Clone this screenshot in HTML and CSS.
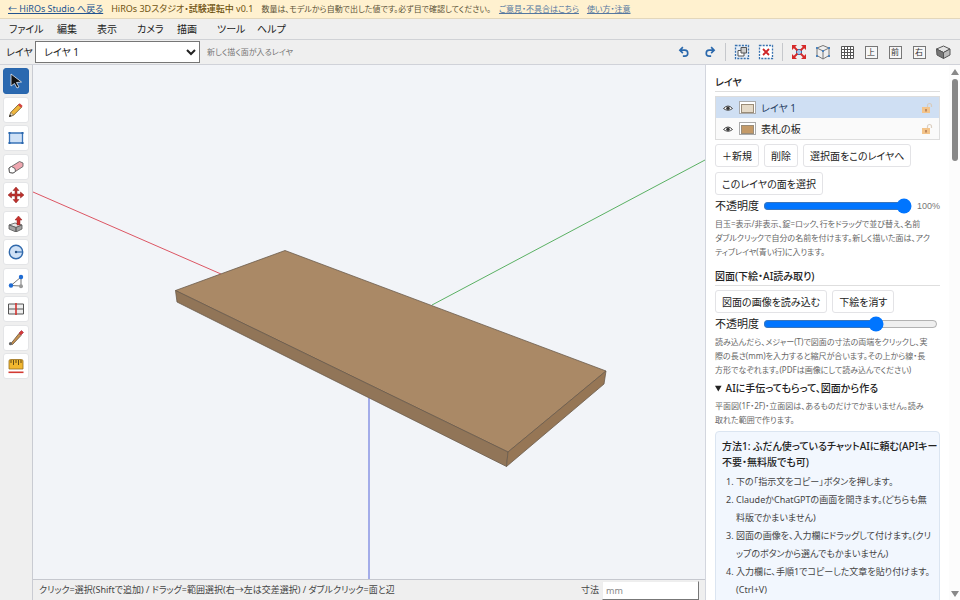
FILE: index.html
```html
<!DOCTYPE html>
<html lang="ja">
<head>
<meta charset="utf-8">
<meta name="viewport" content="width=device-width, initial-scale=1">
<title>HiROs 3Dスタジオ</title>
<link rel="stylesheet" href="styles.css">
</head>
<body>
<header class="notice">
  <a href="#back">← HiROs Studio へ戻る</a>
  <strong class="product">HiROs 3Dスタジオ・<b>試験運転中</b> v0.1</strong>
  <span class="notice-text">数量は、モデルから自動で出した値です。必ず目で確認してください。</span>
  <a class="soft" href="#feedback">ご意見・不具合はこちら</a>
  <a class="soft" href="#guide">使い方・注意</a>
</header>
<nav class="menubar">
  <button type="button">ファイル</button>
  <button type="button">編集</button>
  <button type="button">表示</button>
  <button type="button">カメラ</button>
  <button type="button">描画</button>
  <button type="button">ツール</button>
  <button type="button">ヘルプ</button>
</nav>
<div class="toolbar">
  <label for="layer">レイヤ</label>
  <select id="layer"><option>レイヤ 1</option><option>表札の板</option></select>
  <span class="toolbar-hint">新しく描く面が入るレイヤ</span>
  <div class="actions">
    <div class="history">
      <button type="button" aria-label="元に戻す"><svg viewBox="0 0 16 16"><path d="M6.500 1.500 2.500 5.500l4 4M3 5.500h6a4 4 0 0 1 0 8H6.500" fill="none" stroke="#2a68ac" stroke-width="2.200"/></svg></button>
      <button type="button" aria-label="やり直す"><svg viewBox="0 0 16 16"><path d="m9.500 1.500 4 4-4 4M13 5.500H7a4 4 0 0 0 0 8h2.500" fill="none" stroke="#2a68ac" stroke-width="2.200"/></svg></button>
    </div>
    <span class="sep"></span>
    <button type="button" aria-label="グループ化"><svg viewBox="0 0 16 16"><path d="M1.500 1.500h13v13h-13z" fill="#e4edf7" stroke="#3872b0" stroke-width="1.300" stroke-dasharray="2 1.200"/><path d="M4 6.500h6V12H4z" fill="#fff" stroke="#555"/><path d="M7 3.500h5.500V9H7z" fill="#ccc" stroke="#555"/></svg></button>
    <button type="button" aria-label="グループ解除"><svg viewBox="0 0 16 16"><path d="M1.500 1.500h13v13h-13z" fill="#fff" stroke="#3872b0" stroke-width="1.300" stroke-dasharray="2 1.200"/><path d="m5 5 6 6m0-6-6 6" stroke="#cf2528" stroke-width="1.800"/></svg></button>
    <span class="sep"></span>
    <button type="button" aria-label="全体表示"><svg viewBox="0 0 16 16"><path d="M5.500 5.500h5v5h-5z" fill="#a9c6e8" stroke="#3872b0"/><path d="m2.500 2.500 4 4m7-4-4 4m-7 7 4-4m7 4-4-4" stroke="#d62a2a" stroke-width="1.800"/><path d="M1 1h5L1 6zM15 1v5l-5-5zM1 15v-5l5 5zM15 15h-5l5-5z" fill="#d62a2a"/></svg></button>
    <button type="button" aria-label="立体表示"><svg viewBox="0 0 16 16"><path d="m2 4 6-2.500L14 4v7.500L8 15l-6-3.500zM2 4l6 3 6-3M8 7v8" fill="none" stroke="#777"/><g fill="#4c82bc"><path d="M1 3h2v2H1zM13 3h2v2h-2zM1 11h2v2H1zM13 11h2v2h-2zM7 6h2v2H7z"/></g></svg></button>
    <button type="button" aria-label="グリッド"><svg viewBox="0 0 16 16"><path d="M2.500 2.500h12v12h-12zM5.500 2.500v12m3-12v12m3-12v12M2.500 5.500h12M2.500 8.500h12M2.500 11.500h12" fill="#fff" stroke="#555"/></svg></button>
    <button type="button" class="view"><span>上</span></button>
    <button type="button" class="view"><span>前</span></button>
    <button type="button" class="view"><span>右</span></button>
    <button type="button" aria-label="等角投影"><svg viewBox="0 0 16 16"><path d="m1.500 5 7-3 6.500 3-6.500 3.500z" fill="#e4e4e4" stroke="#555"/><path d="m1.500 5 7 3.500v6L2 11z" fill="#777" stroke="#555"/><path d="M8.500 8.500 15 5v6l-6.500 3.500z" fill="#bbb" stroke="#555"/></svg></button>
  </div>
</div>
<div class="workspace">
  <aside class="tools">
    <button type="button" class="active" aria-label="選択"><svg viewBox="0 0 16 16"><path d="m3 1 10.500 8-5 .5 2.500 4.500-2 1-2.500-4.500L3 13z" fill="#111" stroke="#e8eef5" stroke-width=".8"/></svg></button>
    <button type="button" aria-label="線"><svg viewBox="0 0 16 16"><path d="m1.500 14.500 1.200-4 7.800-8 3 2.800-8 8z" fill="#efb63d" stroke="#6e5424" stroke-width=".8"/><path d="m10 3 1.700-1.700 3 2.800L13 5.800z" fill="#d3433e"/><path d="m3 10.500 2.500 2.500-4 1.500z" fill="#f0dcc0" stroke="#555" stroke-width=".5"/><path d="m1 15 1-2.500L3.500 14z" fill="#222"/></svg></button>
    <button type="button" aria-label="四角形"><svg viewBox="0 0 16 16"><path d="M1.500 3h13v10h-13z" fill="#cfe1f6" stroke="#3973b8" stroke-width="1.300"/><path d="M.5 2h2v2h-2zM13.500 2h2v2h-2zM.5 12h2v2h-2zM13.500 12h2v2h-2z" fill="#2966ad"/></svg></button>
    <button type="button" aria-label="消しゴム"><svg viewBox="0 0 16 16"><path d="m1 9 10.500-6.500 3.500 1.500v3.500L5 14l-3.500-.5z" fill="#efa7b0" stroke="#666" stroke-width=".9"/><path d="m1 9 2.500-1.500L7 9.500l.5 3L5 14l-3.500-.5z" fill="#fff" stroke="#555" stroke-width=".9"/></svg></button>
    <button type="button" aria-label="移動"><svg viewBox="0 0 16 16"><path d="m8 0 3 3.500H9V7h3.500V5L16 8l-3.500 3V9H9v3.500h2L8 16l-3-3.500h2V9H3.500v2L0 8l3.500-3v2H7V3.500H5z" fill="#bd302c" stroke="#8e2725" stroke-width=".5"/></svg></button>
    <button type="button" aria-label="押し出し"><svg viewBox="0 0 16 16"><path d="m1 9 6-2 7 2-6 2.500z" fill="#e5e5e5" stroke="#555" stroke-width=".8"/><path d="m1 9 7 2.500V16l-7-3zM8 11.500 14 9v4l-6 3z" fill="#a3a3a3" stroke="#555" stroke-width=".8"/><path d="M9 9V4H7l3.500-4L14 4h-2v5z" fill="#c9302c" stroke="#8e2725" stroke-width=".5"/></svg></button>
    <button type="button" aria-label="円"><svg viewBox="0 0 16 16"><circle cx="8" cy="8" r="6.700" fill="#cfe1f6" stroke="#3069ac" stroke-width="1.400"/><path d="M8 8h6" stroke="#3069ac" stroke-width="1.200"/><circle cx="8" cy="8" r="1.200" fill="#234f84"/></svg></button>
    <button type="button" aria-label="頂点編集"><svg viewBox="0 0 16 16"><path d="M3 12.500 13 4v9z" fill="none" stroke="#777"/><circle cx="3" cy="12.500" r="2.200" fill="#1e6bd3"/><circle cx="13" cy="4" r="2.200" fill="#1e6bd3"/><circle cx="13" cy="13.200" r="2" fill="#999"/></svg></button>
    <button type="button" aria-label="分割"><svg viewBox="0 0 16 16"><path d="M.5 3h15v10H.5zM.5 8h15" fill="#eee" stroke="#555"/><path d="M8 2v12" stroke="#d2322f" stroke-width="1.600"/></svg></button>
    <button type="button" aria-label="スポイト"><svg viewBox="0 0 16 16"><path d="m3 13.500 8-10 2 2-8.500 9z" fill="#c99350" stroke="#665039" stroke-width=".8"/><path d="m11 3 2.500-2.500 2 2L13 5z" fill="#d33b37" stroke="#913" stroke-width=".5"/><circle cx="2.500" cy="13.700" r="1.600" fill="#666"/></svg></button>
    <button type="button" aria-label="メジャー"><svg viewBox="0 0 16 16"><path d="M1 3q0-1.500 1.500-1.500h11Q15 1.500 15 3v8H1z" fill="#f2b72f" stroke="#98701e" stroke-width=".8"/><path d="M3 2v3m2.500-3v5M8 2v3m2.500-3v5M13 2v3" stroke="#554014" stroke-width=".9"/><path d="M.5 14.300h15" stroke="#d33a32" stroke-width="1.600"/></svg></button>
  </aside>
  <main class="stage">
    <svg class="scene" viewBox="33 65 672 514" preserveAspectRatio="xMidYMid slice" role="img" aria-label="表札の板の3Dモデル">
      <path d="m33 192 188 82" stroke="#dc5563" fill="none"/>
      <path d="m432 305 273-145" stroke="#5ab063" fill="none"/>
      <path d="M369 398v181" stroke="#a3ace9" stroke-width="2" fill="none"/>
      <g stroke="#6b5c4c" stroke-width=".8" stroke-linejoin="round">
        <path d="M285 250.500 606 371 508 452 175.500 290.500z" fill="#aa8966"/>
        <path d="M175.500 290.500 508 452l-1.500 14.500L177 302z" fill="#917558"/>
        <path d="m508 452 98-81-2 13-97.500 82.500z" fill="#967655"/>
      </g>
    </svg>
    <footer class="status">
      <span>クリック=選択(Shiftで追加) / ドラッグ=範囲選択(右→左は交差選択) / ダブルクリック=面と辺</span>
      <label for="size">寸法</label>
      <input id="size" type="text" placeholder="mm">
    </footer>
  </main>
  <aside class="side">
    <div class="panel">
      <h2>レイヤ</h2>
      <ul class="layers">
        <li class="current"><svg class="eye" viewBox="0 0 10 8"><path d="M.5 4.500q4.500-5 9 0-4.500 3.500-9 0z" fill="#fff" stroke="#444"/><circle cx="5" cy="4.200" r="1.700" fill="#333"/></svg><i class="swatch pale"></i><span>レイヤ 1</span><svg class="lock" viewBox="0 0 12 12"><path d="M6.500 5V3.500a2 2 0 0 1 4 0V5" fill="none" stroke="#d8cbbd" stroke-width="1.200"/><path d="M1 5h8v6H1z" fill="#f3c48a"/><path d="M5 7v2.500" stroke="#a9714a" stroke-width="1.400"/></svg></li>
        <li><svg class="eye" viewBox="0 0 10 8"><path d="M.5 4.500q4.500-5 9 0-4.500 3.500-9 0z" fill="#fff" stroke="#444"/><circle cx="5" cy="4.200" r="1.700" fill="#333"/></svg><i class="swatch wood"></i><span>表札の板</span><svg class="lock" viewBox="0 0 12 12"><path d="M6.500 5V3.500a2 2 0 0 1 4 0V5" fill="none" stroke="#dccfc1" stroke-width="1.200"/><path d="M1 5h8v6H1z" fill="#f3c48a"/><path d="M5 7v2.500" stroke="#a9714a" stroke-width="1.400"/></svg></li>
      </ul>
      <div class="buttons">
        <button type="button">＋新規</button>
        <button type="button">削除</button>
        <button type="button">選択面をこのレイヤへ</button>
        <button type="button">このレイヤの面を選択</button>
      </div>
      <div class="slider"><label for="layer-opacity">不透明度</label><input id="layer-opacity" type="range" value="100"><output for="layer-opacity">100%</output></div>
      <p class="hint">目玉=表示/非表示、錠=ロック、行をドラッグで並び替え、名前<br>ダブルクリックで自分の名前を付けます。新しく描いた面は、アク<br>ティブレイヤ(青い行)に入ります。</p>
      <h2 class="next">図面(下絵・AI読み取り)</h2>
      <div class="buttons">
        <button type="button">図面の画像を読み込む</button>
        <button type="button">下絵を消す</button>
      </div>
      <div class="slider"><label for="draft-opacity">不透明度</label><input id="draft-opacity" type="range" value="66"></div>
      <p class="hint">読み込んだら、メジャー(T)で図面の寸法の両端をクリックし、実<br>際の長さ(mm)を入力すると縮尺が合います。その上から線・長<br>方形でなぞれます。(PDFは画像にして読み込んでください)</p>
      <details open>
        <summary>AIに手伝ってもらって、図面から作る</summary>
        <p class="hint">平面図(1F・2F)・立面図は、あるものだけでかまいません。読み<br>取れた範囲で作ります。</p>
        <section class="method">
          <h3>方法1: ふだん使っているチャットAIに頼む(APIキー<br>不要・無料版でも可)</h3>
          <ol>
            <li>下の「指示文をコピー」ボタンを押します。</li>
            <li>ClaudeかChatGPTの画面を開きます。(どちらも無<br>料版でかまいません)</li>
            <li>図面の画像を、入力欄にドラッグして付けます。(クリ<br>ップのボタンから選んでもかまいません)</li>
            <li>入力欄に、手順1でコピーした文章を貼り付けます。<br>(Ctrl+V)</li>
          </ol>
        </section>
      </details>
    </div>
    <div class="scrollbar" aria-hidden="true">
      <svg viewBox="0 0 8 6"><path d="M4 0 8 6H0z" fill="#888"/></svg>
      <i></i>
      <svg class="down" viewBox="0 0 8 6"><path d="M0 0h8L4 6z" fill="#888"/></svg>
    </div>
  </aside>
</div>
</body>
</html>
```
FILE: styles.css
```css
* { box-sizing: border-box; }

body {
  margin: 0;
  height: 100vh;
  display: flex;
  flex-direction: column;
  overflow: hidden;
  background: #efefef;
  color: #222;
  font-family: "Noto Sans", "Noto Sans CJK JP", sans-serif;
  font-size: 10px;
  line-height: 16px;
  font-feature-settings: "palt";
}

button, input, select {
  font: inherit;
  font-feature-settings: inherit;
  color: inherit;
}

button { padding: 0; border: 0; background: none; }
svg { display: block; }

.notice {
  display: flex;
  align-items: center;
  gap: 8px;
  height: 19px;
  padding: 0 8px;
  flex: none;
  background: #fff1cf;
  border-bottom: 1px solid #e3d7bb;
  font-size: 9px;
  white-space: nowrap;
}
.notice a { color: #23538f; }
.notice a.soft { color: #5577a0; font-size: 8px; }
.product { color: #705311; font-weight: 400; }
.product b { font-weight: 500; }
.notice-text { color: #5c5338; font-size: 8px; }

.menubar {
  display: grid;
  grid-template-columns: 48px repeat(6, 40px);
  height: 21px;
  padding: 0 9px;
  flex: none;
  border-bottom: 1px solid #d0d2d6;
}
.menubar button { text-align: left; }

.toolbar {
  display: flex;
  align-items: center;
  height: 25px;
  padding: 0 5px 0 6px;
  flex: none;
  border-bottom: 1px solid #d0d2d9;
  white-space: nowrap;
}
.toolbar label { width: 29px; }
.toolbar select {
  width: 165px;
  height: 22px;
  padding: 0 4px;
  border: 1px solid #767676;
  border-radius: 0;
  background: #fff;
}
.toolbar-hint { margin-left: 7px; color: #777; font-size: 8px; }
.actions { display: flex; align-items: center; margin-left: auto; }
.actions button { display: grid; place-items: center; width: 24px; height: 22px; }
.actions svg { width: 16px; height: 16px; }
.history { display: flex; gap: 4px; }
.history button { width: 22px; }
.history svg { width: 12px; height: 12px; }
.sep { width: 1px; height: 18px; margin: 0 4px; background: #c6c8cc; }
.view span {
  display: grid;
  place-items: center;
  width: 13px;
  height: 13px;
  border: 1px solid #777;
  background: #f7f7f7;
  color: #333;
  font-size: 8px;
  line-height: 8px;
}

.workspace { display: flex; flex: 1; min-height: 0; }

.tools {
  display: flex;
  flex-direction: column;
  width: 33px;
  padding: 3px 3px;
  flex: none;
  border-right: 1px solid #c9cbd2;
}
.tools button {
  display: grid;
  place-items: center;
  width: 26px;
  height: 26px;
  border: 1px solid #e4e5e7;
  border-radius: 3px;
  background: #fff;
}
.tools button + button { margin-top: 2px; }
.tools button:nth-child(even) { margin-top: 3px; }
.tools .active { border-color: #2866ad; background: #2b69b0; }
.tools svg { width: 16px; height: 16px; }

.stage { display: flex; flex: 1; flex-direction: column; min-width: 0; }
.scene { width: 100%; flex: 1; min-height: 0; background: #f2f4f8; }
.status {
  display: flex;
  align-items: center;
  height: 21px;
  padding: 0 6px;
  flex: none;
  border-top: 1px solid #c6c8cf;
  color: #444;
  font-size: 9px;
  white-space: nowrap;
}
.status label { margin: 0 3px 0 auto; }
.status input {
  width: 97px;
  height: 19px;
  padding: 0 3px;
  border: 1px solid #777;
  border-left-color: #eee;
  background: #fff;
  border-top-color: #eee;
}
.status input::placeholder { color: #888; }

.side {
  display: flex;
  width: 255px;
  flex: none;
  border-left: 1px solid #d3d6de;
  background: #fff;
}
.panel {
  flex: 1;
  min-width: 0;
  padding: 9px 9px 0;
  overflow: hidden;
}
.scrollbar {
  display: flex;
  flex-direction: column;
  align-items: center;
  width: 11px;
  padding: 4px 0 3px;
  background: #fcfcfc;
}
.scrollbar svg { width: 8px; height: 6px; }
.scrollbar i { width: 6px; height: 82px; margin-top: 4px; border-radius: 3px; background: #888; }
.scrollbar .down { margin-top: auto; }

h2 {
  margin: 0 0 4px;
  padding-bottom: 1px;
  border-bottom: 1px solid #dedede;
  font-size: 10px;
  font-weight: 500;
}
h2.next { margin-top: 9px; }

.layers { margin: 0 0 4px; padding: 0; border: 1px solid #ddd; list-style: none; }
.layers li {
  display: flex;
  align-items: center;
  height: 21px;
  padding: 0 6px 0 7px;
  background: #fafafa;
}
.layers .current { background: #cfdff3; color: #274063; }
.eye { width: 10px; height: 8px; margin-right: 6px; }
.swatch {
  width: 17px;
  height: 13px;
  margin-right: 5px;
  border: 1px solid #aaa;
  background: #fff;
  padding: 2px 1px;
}
.swatch::before { content: ""; display: block; height: 7px; border: 1px solid #9a8c78; background: #c49a68; }
.pale::before { background: #e5dac8; }
.lock { width: 12px; height: 12px; margin-left: auto; }

.buttons { display: flex; flex-wrap: wrap; gap: 5px; }
.buttons button {
  height: 23px;
  padding: 0 6px;
  border: 1px solid #e3e3e6;
  border-radius: 3px;
  background: #fff;
  white-space: nowrap;
}

.slider { display: flex; align-items: center; height: 22px; }
.slider label { width: 48px; flex: none; font-size: 11px; }
.slider input { flex: 1; min-width: 0; margin: 0 2px 0 0; height: 10px; accent-color: #0075ff; }
.slider output { margin-left: 3px; color: #777; font-family: "Liberation Sans", sans-serif; font-size: 9px; }

.hint { margin: 0; color: #666; font-size: 8px; line-height: 14px; white-space: nowrap; }
summary { font-weight: 500; line-height: 22px; white-space: nowrap; }
.method {
  margin-top: 4px;
  padding: 6px;
  border: 1px solid #dbe5f1;
  border-radius: 4px;
  background: #f2f7fe;
  white-space: nowrap;
}
h3 { margin: 0 0 3px; font-size: 10px; font-weight: 500; }
ol { margin: 0; padding-left: 14px; color: #444; font-size: 9px; line-height: 18px; }
```
